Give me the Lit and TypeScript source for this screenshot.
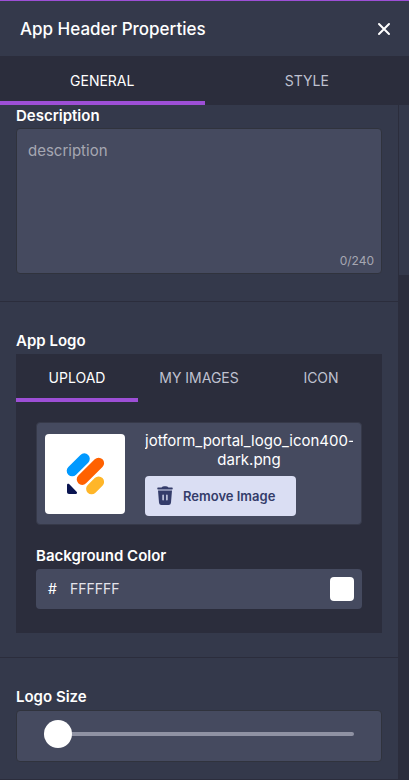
import { LitElement, html, css } from "lit";
import { customElement, state } from "lit/decorators.js";

@customElement("app-root")
export class AppRoot extends LitElement {
  @state() private tab = "General";
  @state() private source = "Upload";
  @state() private description = "";

  static styles = css`
    :host {
      --panel: #34394b;
      --dark: #2b2d3c;
      --field: #454a5f;
      --edge: #30333d;
      --accent: #9d4fd6;
      --muted: #bfc1d0;
      display: flex;
      flex-direction: column;
      height: 100vh;
      overflow: hidden;
      box-sizing: border-box;
      border-top: 1px solid var(--accent);
      background: var(--panel);
      color: #fff;
      font-family: Inter, "Liberation Sans", sans-serif;
      font-size: 14px;
      line-height: 20px;
    }
    * {
      box-sizing: border-box;
    }
    button,
    input,
    textarea {
      font: inherit;
      color: inherit;
      margin: 0;
      padding: 0;
      border: 0;
      background: none;
    }
    button {
      cursor: pointer;
    }
    .header {
      display: flex;
      flex: none;
      align-items: center;
      justify-content: space-between;
      height: 55px;
      padding: 0 18px 0 20px;
    }
    .title {
      margin: 0;
      font-size: 17px;
      font-weight: 500;
    }
    .close {
      display: flex;
    }
    .tabs {
      display: flex;
      flex: none;
      background: var(--dark);
    }
    .tab {
      flex: 1;
      height: 48px;
      border-top: 4px solid transparent;
      border-bottom: 4px solid transparent;
      color: var(--muted);
      text-transform: uppercase;
    }
    .main-tab {
      height: 49px;
    }
    .tab.active {
      color: #fff;
      border-bottom-color: var(--accent);
    }
    .body {
      display: flex;
      flex: 1;
      min-height: 0;
    }
    .content {
      flex: 1;
      min-width: 0;
      overflow: hidden;
    }
    .rail {
      width: 11px;
      border-left: 1px solid var(--dark);
      background: var(--dark);
    }
    .thumb {
      height: 170px;
      background: var(--panel);
    }
    .section {
      padding: 28px 16px 24px;
      border-bottom: 1px solid var(--dark);
    }
    .section.first {
      padding-top: 0;
      padding-bottom: 27px;
    }
    .label {
      display: block;
      height: 24px;
      font-size: 15px;
      line-height: 22px;
      font-weight: 600;
    }
    .first .label {
      height: 23px;
    }
    .box {
      border: 1px solid var(--edge);
      border-radius: 4px;
      background: var(--field);
    }
    .area {
      position: relative;
      display: flex;
    }
    .text {
      width: 100%;
      height: 144px;
      padding: 12px 11px;
      font-size: 15px;
      resize: none;
      outline: none;
    }
    .text::placeholder {
      color: #a5a7b2;
      opacity: 1;
    }
    .count {
      position: absolute;
      right: 7px;
      bottom: 4px;
      font-size: 12px;
      line-height: 16px;
      color: #a5a7b2;
    }
    .logo-panel {
      background: var(--dark);
    }
    .logo-body {
      padding: 20px 20px 24px;
    }
    .card {
      display: flex;
      gap: 20px;
      padding: 11px 8px 8px;
      margin-bottom: 20px;
      border-color: #363949;
    }
    .preview {
      flex: none;
      width: 80px;
      height: 80px;
      border-radius: 4px;
      background: #fff;
    }
    .info {
      flex: 1;
      min-width: 0;
    }
    .filename {
      margin: -3px 0 7px;
      overflow: hidden;
      font-size: 15px;
      line-height: 19px;
      text-align: center;
    }
    .remove {
      display: flex;
      align-items: center;
      gap: 6px;
      height: 40px;
      padding: 0 21px 0 8px;
      border-radius: 4px;
      background: #dadef3;
      color: #343c6a;
      font-size: 13px;
      font-weight: 600;
    }
    .color-row {
      display: flex;
      align-items: center;
      height: 40px;
      padding: 0 8px 0 12px;
      border-radius: 4px;
      background: var(--field);
    }
    .hash {
      width: 22px;
    }
    .hex {
      flex: 1;
      min-width: 0;
      color: #e3e3ea;
      outline: none;
    }
    .swatch {
      width: 24px;
      height: 24px;
      appearance: none;
      border-radius: 4px;
      overflow: hidden;
      background: #fff;
    }
    .swatch::-webkit-color-swatch-wrapper {
      padding: 0;
    }
    .swatch::-webkit-color-swatch {
      border: 0;
    }
    .slider-box {
      display: flex;
      align-items: center;
      height: 52px;
      padding: 0 27px;
    }
    .range {
      width: 100%;
      height: 28px;
      appearance: none;
      margin-bottom: 4px;
    }
    .range::-webkit-slider-runnable-track {
      height: 4px;
      border-radius: 2px;
      background: #8f92a3;
    }
    .range::-webkit-slider-thumb {
      appearance: none;
      width: 28px;
      height: 28px;
      margin-top: -12px;
      border-radius: 50%;
      background: #fff;
    }
    .section.last {
      padding-bottom: 17px;
    }
  `;

  render() {
    return html`
      <header class="header">
        <h1 class="title">App Header Properties</h1>
        <button class="close" aria-label="Close">
          <svg width="14" height="14" viewBox="0 0 14 14" fill="none" stroke="#fff" stroke-width="2" stroke-linecap="round">
            <path d="M2 2L12 12M12 2L2 12" />
          </svg>
        </button>
      </header>
      <nav class="tabs" role="tablist">
        ${["General", "Style"].map(
          (t) => html`<button
            class="tab main-tab ${t === this.tab ? "active" : ""}"
            role="tab"
            aria-selected=${t === this.tab}
            @click=${() => (this.tab = t)}
          >${t}</button>`
        )}
      </nav>
      <div class="body">
        <main class="content">
          <section class="section first">
            <label class="label" for="description">Description</label>
            <div class="box area">
              <textarea
                id="description"
                class="text"
                maxlength="240"
                placeholder="description"
                .value=${this.description}
                @input=${(e: Event) => (this.description = (e.target as HTMLTextAreaElement).value)}
              ></textarea>
              <span class="count">${this.description.length}/240</span>
            </div>
          </section>

          <section class="section">
            <span class="label">App Logo</span>
            <div class="logo-panel">
              <div class="tabs" role="tablist">
                ${["Upload", "My Images", "Icon"].map(
                  (t) => html`<button
                    class="tab ${t === this.source ? "active" : ""}"
                    role="tab"
                    aria-selected=${t === this.source}
                    @click=${() => (this.source = t)}
                  >${t}</button>`
                )}
              </div>
              <div class="logo-body">
                <div class="box card">
                  <svg class="preview" viewBox="0 0 80 80" fill="none" role="img" aria-label="App logo">
                    <g stroke-linecap="round" stroke-width="11">
                      <path d="M27.2 36.8L39.3 24.8" stroke="#0099ff" />
                      <path d="M37.2 45.4L53.6 29.2" stroke="#ff6100" />
                      <path d="M46.6 54.8L53.6 47.9" stroke="#ffb629" />
                    </g>
                    <path d="M22 51C22 49.8 23.3 49.3 24.1 50.1L31.6 57.7C32.5 58.6 32 60 30.8 60H24C22.8 60 22 59.2 22 58Z" fill="#0a1551" />
                  </svg>
                  <div class="info">
                    <p class="filename">jotform_portal_logo_icon400-dark.png</p>
                    <button class="remove">
                      <svg width="24" height="24" viewBox="0 0 24 24" fill="#343c6a">
                        <path d="M5 3.4H8.5C9.2 2.7 10.2 2.3 11.2 2.3H12.8C13.8 2.3 14.8 2.7 15.5 3.4H19C20 3.4 20 5.600 19 5.600H5C4 5.600 4 3.400 5 3.400Z" />
                        <path fill-rule="evenodd" d="M5 6.500H19L18 18.500C17.800 20.200 16.900 21 15.500 21H8.500C7.100 21 6.200 20.200 6 18.500ZM9.400 11.300V15.700A.7.7 0 0 0 10.800 15.700V11.300A.7.7 0 0 0 9.400 11.300ZM13.200 11.300V15.700A.7.7 0 0 0 14.600 15.700V11.300A.7.7 0 0 0 13.200 11.300Z" />
                      </svg>
                      Remove Image
                    </button>
                  </div>
                </div>
                <label class="label" for="hex">Background Color</label>
                <div class="color-row">
                  <span class="hash">#</span>
                  <input id="hex" class="hex" type="text" value="FFFFFF" maxlength="6" />
                  <input class="swatch" type="color" value="#ffffff" aria-label="Pick background color" />
                </div>
              </div>
            </div>
          </section>

          <section class="section last">
            <label class="label" for="size">Logo Size</label>
            <div class="box slider-box">
              <input id="size" class="range" type="range" min="0" max="100" value="0" />
            </div>
          </section>
        </main>
        <div class="rail"><div class="thumb"></div></div>
      </div>
    `;
  }
}
